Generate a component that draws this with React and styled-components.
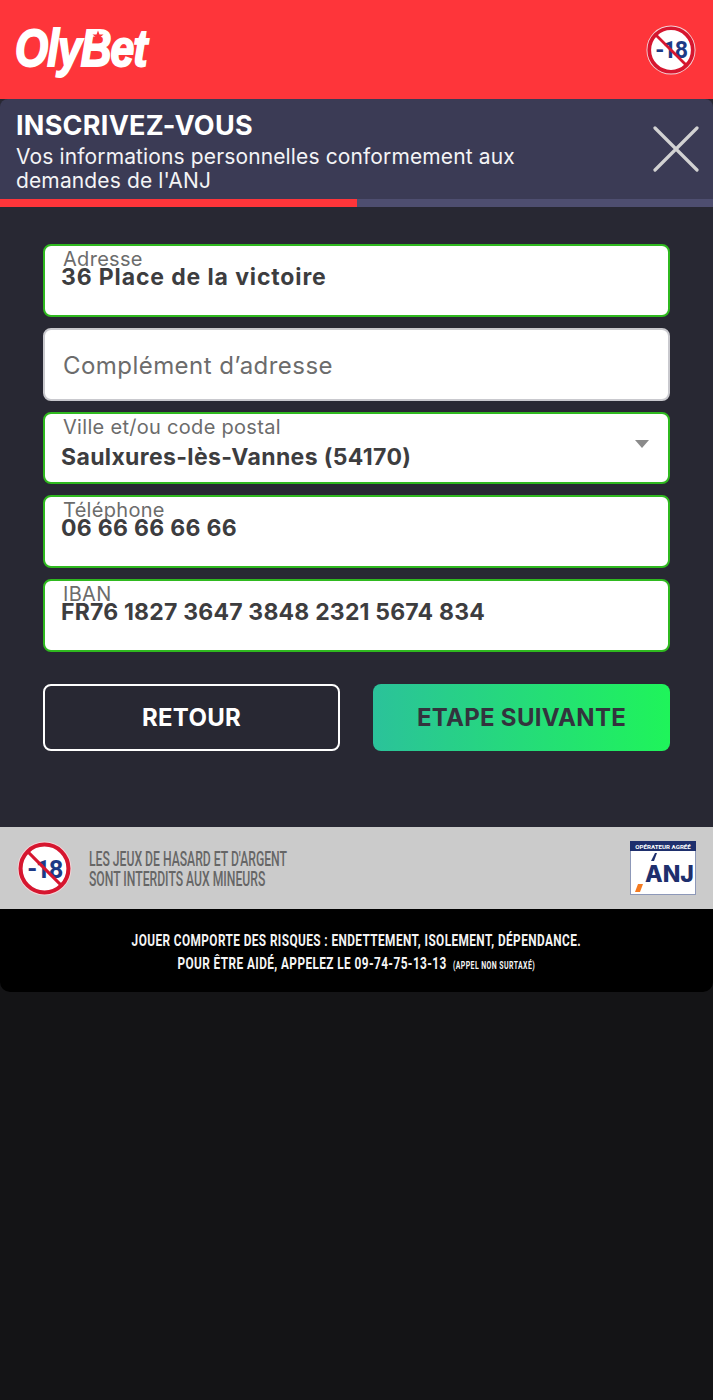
import styled, { createGlobalStyle } from "styled-components";

const GlobalStyle = createGlobalStyle`
  html, body {
    margin: 0;
    padding: 0;
    background: #141416;
  }
  * {
    box-sizing: border-box;
  }
`;

const Page = styled.div`
  width: 713px;
  height: 1400px;
  background: #141416;
  font-family: Inter, "Liberation Sans", sans-serif;
  overflow: hidden;
`;

const Header = styled.header`
  height: 99px;
  background: #fe353a;
  display: flex;
  align-items: center;
  justify-content: space-between;
  padding: 0 17px 0 15px;
`;

const Logo = styled.div`
  position: relative;
  width: 134px;
  height: 50px;
  margin-top: -4px;
  color: #fff;
  font-family: "Liberation Sans", sans-serif;
  font-weight: 700;
  font-style: italic;
  font-size: 52px;
  line-height: 50px;
  letter-spacing: -1.2px;
  white-space: nowrap;
`;

const LogoText = styled.span`
  display: inline-block;
  transform: scaleX(0.82);
  transform-origin: left center;
  -webkit-text-stroke: 2px #fff;
`;

const LogoStar = styled.svg`
  position: absolute;
  left: 77px;
  top: 7px;
`;

const Panel = styled.section`
  background: #282833;
`;

const TitleBar = styled.div`
  height: 100px;
  background: #3b3b55;
  border-radius: 8px 8px 0 0;
  position: relative;
  padding: 12px 0 0 16px;
  color: #fff;
`;

const Title = styled.h1`
  margin: 0;
  font-size: 27px;
  line-height: 30px;
  font-weight: 700;
  letter-spacing: 0.25px;
`;

const Subtitle = styled.p`
  margin: 4px 0 0;
  width: 540px;
  font-size: 21px;
  line-height: 24px;
  font-weight: 400;
  letter-spacing: 0.13px;
  color: #f4f4f6;
`;

const CloseIcon = styled.svg`
  position: absolute;
  right: 14px;
  top: 27px;
`;

const Progress = styled.div`
  height: 8px;
  background: #4e4e70;
`;

const ProgressFill = styled.div`
  height: 100%;
  width: ${(props) => props.$value}%;
  background: #fe353a;
`;

const Form = styled.div`
  padding: 37px 43px 76px;
  display: flex;
  flex-direction: column;
  gap: 11px;
`;

const Field = styled.div`
  position: relative;
  height: 72.75px;
  background: #fff;
  border-radius: 8px;
  border: 2px solid ${(props) => (props.$valid ? "#2fb91f" : "#c9c9ce")};
  padding: 3px 0 0 18px;
`;

const Label = styled.div`
  font-size: 20px;
  line-height: 20px;
  letter-spacing: 0.3px;
  color: #6c6c6c;
  white-space: nowrap;
`;

const Value = styled.div`
  margin-left: -2px;
  margin-top: ${(props) => (props.$spaced ? "7px" : "-5px")};
  font-size: 23px;
  line-height: 26px;
  font-weight: 700;
  letter-spacing: ${(props) => props.$tracking}px;
  color: #3d3d3f;
  white-space: nowrap;
`;

const Placeholder = styled.div`
  font-size: 24px;
  line-height: 65px;
  letter-spacing: 0.45px;
  color: #6c6c6c;
`;

const Caret = styled.span`
  position: absolute;
  right: 19px;
  top: 26px;
  width: 0;
  height: 0;
  border-left: 7px solid transparent;
  border-right: 7px solid transparent;
  border-top: 8px solid #8a8a8a;
`;

const Actions = styled.div`
  display: grid;
  grid-template-columns: 1fr 1fr;
  gap: 33px;
  margin-top: 21.25px;
`;

const Button = styled.button`
  height: 67px;
  border-radius: 8px;
  font-family: inherit;
  font-size: 24px;
  font-weight: 700;
  letter-spacing: 0.3px;
  cursor: pointer;
  color: ${(props) => (props.$primary ? "#33333d" : "#fff")};
  border: ${(props) => (props.$primary ? "none" : "2px solid #fff")};
  background: ${(props) =>
    props.$primary
      ? "linear-gradient(90deg, #2bc29a 0%, #1ff45a 100%)"
      : "transparent"};
`;

const Notice = styled.div`
  height: 82px;
  background: #cbcbcb;
  display: flex;
  align-items: center;
  padding: 0 17px;
  gap: 17px;
`;

const NoticeText = styled.div`
  flex: 1;
  padding-top: 2px;
  font-family: Roboto, "Liberation Sans", sans-serif;
  font-weight: 500;
  font-size: 20px;
  line-height: 20px;
  color: #666;
  white-space: nowrap;
  transform: scaleX(0.608);
  transform-origin: left center;
`;

const Warning = styled.div`
  height: 83px;
  background: #000;
  border-radius: 0 0 10px 10px;
  display: flex;
  flex-direction: column;
  align-items: center;
  padding-top: 20px;
  color: #f4f4f4;
  font-family: Roboto, "Liberation Sans", sans-serif;
  font-weight: 700;
  white-space: nowrap;
`;

const WarningLine = styled.div`
  font-size: 17px;
  line-height: 23px;
  letter-spacing: 0.6px;
  transform: scaleX(0.695);
`;

const Small = styled.span`
  font-size: 10px;
  margin-left: 4px;
`;

const Badge = ({ size }) => (
  <svg width={size} height={size} viewBox="0 0 54 54">
    <circle cx="27" cy="27" r="26.5" fill="#f3d5d8" />
    <circle cx="27" cy="27" r="23.5" fill="#fff" stroke="#d6162f" strokeWidth="4" />
    <text
      x="27"
      y="36"
      textAnchor="middle"
      fontFamily="Roboto, sans-serif"
      fontWeight="700"
      fontSize="25"
      letterSpacing="-1.5"
      fill="#1d3a86"
    >
      -18
    </text>
    <line x1="11" y1="11" x2="43" y2="43" stroke="#d6162f" strokeWidth="3" />
  </svg>
);

const AnjLogo = () => (
  <svg width="66" height="54" viewBox="0 0 66 54">
    <rect x="0.5" y="0.5" width="65" height="53" fill="#fff" stroke="#8d98b8" />
    <rect x="0" y="0" width="66" height="10" fill="#1e2f6d" />
    <text
      x="33"
      y="7.5"
      textAnchor="middle"
      fontFamily="Roboto, sans-serif"
      fontWeight="700"
      fontSize="6.2"
      fill="#fff"
    >
      OPÉRATEUR AGRÉÉ
    </text>
    <text
      x="15"
      y="41"
      fontFamily="Inter, sans-serif"
      fontWeight="800"
      fontSize="23"
      fill="#1e2f6d"
    >
      ANJ
    </text>
    <polygon points="21,20 25,12 27,12 24,20" fill="#1e2f6d" />
    <polygon points="5,51 8,43 13,43 10,51" fill="#f47a20" />
  </svg>
);

const App = () => {
  return (
    <Page>
      <GlobalStyle />
      <Header>
        <Logo>
          <LogoText>OlyBet</LogoText>
          <LogoStar width="12" height="12" viewBox="0 0 24 24">
            <polygon
              points="12,1 15,9 23,9 17,14 19,23 12,18 5,23 7,14 1,9 9,9"
              fill="#fe353a"
            />
          </LogoStar>
        </Logo>
        <Badge size={50} />
      </Header>
      <Panel>
        <TitleBar>
          <Title>INSCRIVEZ-VOUS</Title>
          <Subtitle>
            Vos informations personnelles conformement aux demandes de l'ANJ
          </Subtitle>
          <CloseIcon width="46" height="46" viewBox="0 0 46 46">
            <path
              d="M2 2 L44 44 M44 2 L2 44"
              stroke="#d2d2d2"
              strokeWidth="3.2"
              strokeLinecap="round"
            />
          </CloseIcon>
        </TitleBar>
        <Progress>
          <ProgressFill $value={50} />
        </Progress>
        <Form>
          <Field $valid>
            <Label>Adresse</Label>
            <Value $tracking={0.87}>36 Place de la victoire</Value>
          </Field>
          <Field>
            <Placeholder>Complément d’adresse</Placeholder>
          </Field>
          <Field $valid>
            <Label>Ville et/ou code postal</Label>
            <Value $spaced $tracking={0.36}>Saulxures-lès-Vannes (54170)</Value>
            <Caret />
          </Field>
          <Field $valid>
            <Label>Téléphone</Label>
            <Value $tracking={0.3}>06 66 66 66 66</Value>
          </Field>
          <Field $valid>
            <Label>IBAN</Label>
            <Value $tracking={0.2}>FR76 1827 3647 3848 2321 5674 834</Value>
          </Field>
          <Actions>
            <Button>RETOUR</Button>
            <Button $primary>ETAPE SUIVANTE</Button>
          </Actions>
        </Form>
      </Panel>
      <Notice>
        <Badge size={55} />
        <NoticeText>
          LES JEUX DE HASARD ET D'ARGENT
          <br />
          SONT INTERDITS AUX MINEURS
        </NoticeText>
        <AnjLogo />
      </Notice>
      <Warning>
        <WarningLine>JOUER COMPORTE DES RISQUES : ENDETTEMENT, ISOLEMENT, DÉPENDANCE.</WarningLine>
        <WarningLine>
          POUR ÊTRE AIDÉ, APPELEZ LE 09-74-75-13-13 <Small>(APPEL NON SURTAXÉ)</Small>
        </WarningLine>
      </Warning>
    </Page>
  );
};

export default App;
